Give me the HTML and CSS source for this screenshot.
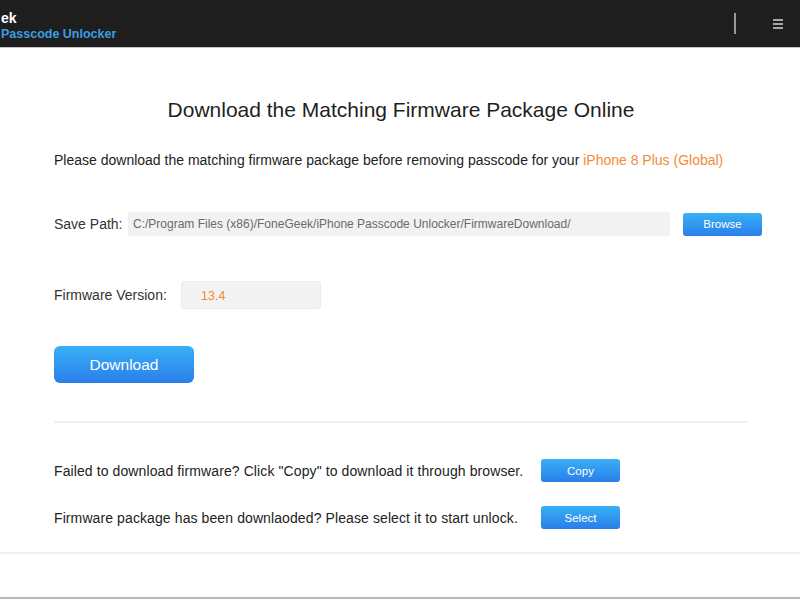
FILE: index.html
```html
<!DOCTYPE html>
<html>
<head>
    <meta charset="UTF-8">
    <title>FoneGeek iPhone Passcode Unlocker</title>
    <link rel="stylesheet" href="styles.css">
</head>
<body>

<div class="topbar">
    <div class="brand">
        <div class="brandTop">ek</div>
        <div class="brandBottom">Passcode Unlocker</div>
    </div>
    <div class="tools">
        <span class="divider"></span>
        <svg class="menu" width="12" height="12" viewBox="0 0 12 12">
            <path d="M1 2H11M1 6H11M1 10H11" stroke="#d8d8d8" stroke-width="1.6"/>
        </svg>
    </div>
</div>

<div id="content">
    <h1>Download the Matching Firmware Package Online</h1>
    <p class="intro">Please download the matching firmware package before removing passcode for your <span class="device">iPhone 8 Plus (Global)</span></p>

    <div class="row savePath">
        <label class="label">Save Path:</label>
        <div class="pathBox">C:/Program Files (x86)/FoneGeek/iPhone Passcode Unlocker/FirmwareDownload/</div>
        <button class="btn small">Browse</button>
    </div>

    <div class="row firmware">
        <label class="label">Firmware Version:</label>
        <div class="versionBox">13.4</div>
    </div>

    <button class="btn big">Download</button>

    <hr class="sep">

    <div class="row help first">
        <span class="helpText">Failed to download firmware? Click "Copy" to download it through browser.</span>
        <button class="btn small">Copy</button>
    </div>
    <div class="row help">
        <span class="helpText">Firmware package has been downlaoded? Please select it to start unlock.</span>
        <button class="btn small">Select</button>
    </div>
</div>

<div class="footer"></div>

</body>
</html>
```

FILE: styles.css
```css
html {
    font-family: "Liberation Sans", Arial, sans-serif;
}

body {
    margin: 0;
    background: #fff;
    color: #222;
}

.topbar {
    height: 47px;
    background: #1e1e1e;
    border-bottom: 1px solid #c8c8c8;
    display: flex;
    align-items: center;
    justify-content: space-between;
}

.brand {
    margin-left: 1px;
    font-weight: bold;
    line-height: 16px;
    padding-top: 5px;
}

.brandTop {
    color: #fff;
    font-size: 14px;
}

.brandBottom {
    color: #3a9fe2;
    font-size: 12.5px;
}

.tools {
    display: flex;
    align-items: center;
    margin-right: 16px;
}

.divider {
    width: 2px;
    height: 21px;
    background: #9a9a9a;
    margin-right: 36px;
}

.menu {
    display: block;
}

#content {
    padding: 0 52px 0 54px;
}

h1 {
    margin: 0;
    padding-top: 50px;
    font-size: 21px;
    line-height: 24px;
    font-weight: normal;
    text-align: center;
    color: #1f1f1f;
}

.intro {
    margin: 29px 0 0;
    font-size: 14px;
    line-height: 18px;
    color: #222;
}

.device {
    color: #f08a3a;
}

.row {
    display: flex;
    align-items: center;
}

.row > * {
    flex-shrink: 0;
}

.label {
    font-size: 14px;
    color: #333;
}

.savePath {
    margin-top: 43px;
    height: 24px;
}

.savePath .label {
    width: 74px;
}

.pathBox {
    width: 542px;
    height: 24px;
    line-height: 24px;
    background: #f2f2f2;
    color: #6a6a6a;
    font-size: 12px;
    padding-left: 5px;
    box-sizing: border-box;
    margin-right: 13px;
    border-radius: 2px;
}

.firmware {
    margin-top: 45px;
    height: 28px;
}

.firmware .label {
    width: 127px;
}

.versionBox {
    width: 140px;
    height: 28px;
    line-height: 28px;
    background: #f3f3f3;
    border: 1px solid #ececec;
    box-sizing: border-box;
    border-radius: 3px;
    color: #f08a3a;
    font-size: 12.5px;
    padding-left: 19px;
}

.btn {
    border: none;
    color: #fff;
    font-family: inherit;
    background: linear-gradient(#38b0f6, #2a7ee9);
    cursor: pointer;
}

.btn.small {
    width: 79px;
    height: 23px;
    font-size: 11.5px;
    border-radius: 3px;
}

.btn.big {
    display: block;
    margin-top: 37px;
    width: 140px;
    height: 37px;
    font-size: 15.5px;
    border-radius: 6px;
}

.sep {
    margin: 38px 0 0;
    border: none;
    height: 2px;
    background: #f0f0f0;
}

.help {
    height: 23px;
    margin-top: 24px;
}

.help.first {
    margin-top: 36px;
}

.helpText {
    width: 487px;
    font-size: 14px;
    letter-spacing: 0.1px;
    color: #222;
}

.footer {
    margin-top: 23px;
    height: 43px;
    border-top: 2px solid #f0f0f0;
    border-bottom: 2px solid #b8b8b8;
}
```
